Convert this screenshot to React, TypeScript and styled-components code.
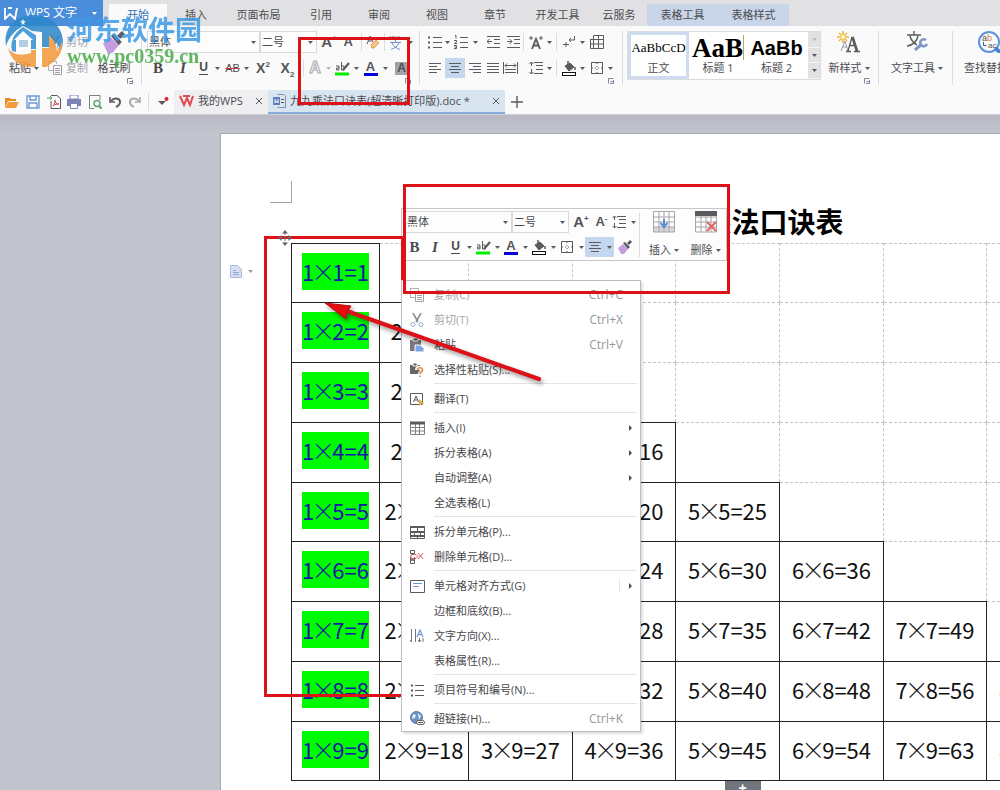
import React from "react";
import styled, { createGlobalStyle, css } from "styled-components";

const Global = createGlobalStyle`
  * { box-sizing: border-box; }
  body { margin: 0; background: #bfc1cb; }
  button, select { font: inherit; color: inherit; border: 0; background: none; padding: 0; margin: 0; }
  a { color: inherit; text-decoration: none; }
`;

/* ---------- shell ---------- */

const Shell = styled.div`
  position: relative;
  display: flex;
  flex-direction: column;
  height: 100vh;
  overflow: hidden;
  font: 11px/16px "Open Sans", "Noto Sans CJK SC", sans-serif;
  color: #4c4c50;
  white-space: nowrap;
`;

const TabBar = styled.nav`
  display: flex;
  align-items: flex-end;
  flex: none;
  height: 26px;
  background: #e1e1e3;
`;

const AppButton = styled.button`
  display: flex;
  align-items: center;
  gap: 7px;
  width: 103px;
  height: 26px;
  margin-right: 6px;
  padding: 0 4px;
  background: #4a8ddb;
  color: #fff;
  font-size: 12px;
`;

const RibbonTab = styled.button<{ $w: number; $kind?: "active" | "context" }>`
  flex: none;
  width: ${(p) => p.$w}px;
  height: 22px;
  padding-bottom: 1px;
  ${(p) => p.$kind === "active" && css`background: #fafafb; color: #2f6fc0;`}
  ${(p) => p.$kind === "context" && css`background: #c9d5e9;`}
`;

const Ribbon = styled.div`
  display: flex;
  flex: none;
  height: 64px;
  padding: 5px 0 4px;
  background: #fafafb;
`;

const Group = styled.div<{ $w?: number }>`
  display: flex;
  flex-direction: column;
  flex: none;
  width: ${(p) => (p.$w ? p.$w + "px" : "auto")};
`;

const Columns = styled.div`
  display: flex;
  height: 47px;
`;

const Row = styled.div<{ $h: number }>`
  display: flex;
  align-items: center;
  flex: none;
  height: ${(p) => p.$h}px;
`;

const Rows = styled.div`
  display: flex;
  flex-direction: column;
  gap: 5px;
`;

const GroupLine = styled.div`
  flex: none;
  width: 1px;
  height: 54px;
  margin: 0 4px 0 1px;
  background: #dcdce0;
`;

const Sep = styled.div`
  flex: none;
  width: 1px;
  height: 18px;
  margin: 0 3px;
  background: #dcdce0;
`;

const Tool = styled.button<{ $w: number; $on?: boolean }>`
  display: flex;
  align-items: center;
  justify-content: center;
  flex: none;
  width: ${(p) => p.$w}px;
  height: 20px;
  background: ${(p) => (p.$on ? "#c5d7ee" : "transparent")};
`;

const Spacer = styled.div<{ $w: number }>`
  flex: none;
  width: ${(p) => p.$w}px;
`;

const Launcher = styled.button`
  display: flex;
  align-self: flex-end;
  height: 8px;
  margin-right: 7px;
`;

const Picker = styled.label<{ $w: number }>`
  display: flex;
  align-items: center;
  flex: none;
  width: ${(p) => p.$w}px;
  height: 22px;
  padding-right: 3px;
  border: 1px solid #dadade;
  background: #fdfdfe;
  select {
    flex: 1;
    min-width: 0;
    padding-left: 1px;
    appearance: none;
    outline: none;
  }
`;

const Letter = styled.span<{ $kind?: "italic" | "under" | "strike" }>`
  font: bold 15px/18px "Liberation Serif", serif;
  color: #4a4a4e;
  ${(p) => p.$kind === "italic" && css`font-style: italic;`}
  ${(p) => p.$kind === "under" && css`font-family: "Liberation Sans", sans-serif; font-size: 12px; line-height: 13px; border-bottom: 1px solid #4a4a4e;`}
  ${(p) => p.$kind === "strike" && css`font: 11px/16px "Liberation Sans", sans-serif; text-decoration: line-through #d04040;`}
`;

const Glyph = styled.span<{ $s: number }>`
  font: bold ${(p) => p.$s}px/18px "Liberation Sans", sans-serif;
  color: #55555a;
  sup, sub { font-size: 8px; line-height: 0; }
`;

const InkLetter = styled.span`
  width: 14px;
  height: 16px;
  border-bottom: 3px solid #0404d8;
  font: bold 13px/13px "Liberation Sans", sans-serif;
  color: #55555a;
  text-align: center;
`;

const OutlineLetter = styled.span`
  font: bold 16px/18px "Liberation Sans", sans-serif;
  color: #fafafb;
  -webkit-text-stroke: 1px #aaaab0;
`;

const ShadedLetter = styled.span`
  width: 13px;
  height: 13px;
  background: #a2a2a8;
  font: bold 12px/13px "Liberation Sans", sans-serif;
  text-align: center;
`;

/* Large button with the drawing above its label */
const TallButton = styled.button<{ $w: number; $h?: number }>`
  display: flex;
  flex-direction: column;
  align-items: center;
  justify-content: space-between;
  flex: none;
  width: ${(p) => p.$w}px;
  height: ${(p) => p.$h || 46}px;
`;

const Caption = styled.span`
  display: flex;
  align-items: center;
  gap: 3px;
  line-height: 18px;
`;

const ClipItem = styled.button`
  display: flex;
  align-items: center;
  gap: 4px;
  height: 20px;
  color: #a5a5aa;
`;

/* ---------- style gallery ---------- */

const Gallery = styled.div`
  display: flex;
  flex: none;
  width: 194px;
  height: 49px;
  border: 1px solid #dcdce0;
  background: #fff;
`;

const StyleCard = styled.button<{ $w: number; $on?: boolean }>`
  display: flex;
  flex-direction: column;
  align-items: center;
  flex: none;
  width: ${(p) => p.$w}px;
  height: 47px;
  overflow: hidden;
  border: 3px solid ${(p) => (p.$on ? "#cfdcef" : "transparent")};
  border-width: ${(p) => (p.$on ? "3px" : "3px 0")};
`;

const Sample = styled.span<{ $kind: "body" | "h1" | "h2" }>`
  height: 25px;
  color: #000;
  font: 13px/26px "Liberation Serif", serif;
  ${(p) => p.$kind === "h1" && css`font: bold 27px/26px "Liberation Serif", serif; border-right: 1px solid #b9a45c;`}
  ${(p) => p.$kind === "h2" && css`font: bold 20px/26px "Liberation Sans", sans-serif;`}
`;

const Scroller = styled.div`
  display: flex;
  flex-direction: column;
  width: 12px;
  margin-left: auto;
  background: #e2e2e5;
  button {
    display: flex;
    flex: 1;
    align-items: center;
    justify-content: center;
    border-bottom: 1px solid #f4f4f5;
  }
`;

/* ---------- document tabs ---------- */

const QuickBar = styled.div`
  display: flex;
  align-items: center;
  flex: none;
  height: 25px;
  padding-left: 2px;
  border-bottom: 1px solid #d0d1d8;
  background: #fafafb;
`;

const FileTab = styled.div<{ $w: number; $on?: boolean }>`
  display: flex;
  align-items: center;
  gap: 4px;
  flex: none;
  width: ${(p) => p.$w}px;
  height: 24px;
  padding: 0 5px;
  background: ${(p) => (p.$on ? "#d9e4f1" : "#efeff1")};
  border-bottom: 2px solid ${(p) => (p.$on ? "#86abd9" : "#efeff1")};
  a { flex: 1; }
`;

/* ---------- document ---------- */

const Canvas = styled.main`
  flex: 1;
  min-height: 0;
  padding: 18px 0 0 220px;
  overflow: hidden;
  background: linear-gradient(#b7b8c3, #c2c4cd 18px);
`;

const Paper = styled.article`
  height: 100%;
  padding-top: 47px;
  border: 1px solid #a9abb6;
  border-width: 1px 0 0 1px;
  background: #fff;
`;

const CropCorner = styled.div`
  width: 22px;
  height: 22px;
  margin-left: 49px;
  border: solid #a4a4a8;
  border-width: 0 1px 1px 0;
`;

const Body = styled.div`
  display: grid;
  grid-template-columns: 70px 903px;
`;

const Title = styled.h1`
  grid-column: 2;
  height: 40px;
  margin: 0;
  padding-left: 6px;
  font: bold 28px/36px "Noto Sans CJK SC", sans-serif;
  color: #000;
  text-align: center;
`;

const Gutter = styled.div`
  display: flex;
  align-items: center;
  align-self: start;
  gap: 6px;
  padding: 22px 0 0 9px;
`;

const Times = styled.table`
  width: 903px;
  table-layout: fixed;
  border-collapse: collapse;
  font: 22px/37px "Liberation Sans Narrow", "Noto Sans CJK SC", sans-serif;
  color: #111;
  tr { height: 60px; }
  tr:nth-child(4n + 1) { height: 59px; }
  td { padding: 0 0 4px; border: 1px dashed #c4c4c8; text-align: center; }
  td.filled { border: 1px solid #222; }
`;

const Sum = styled.span<{ $marked: boolean }>`
  display: flex;
  justify-content: center;
  width: fit-content;
  height: 37px;
  margin: 0 auto;
  line-height: 36px;
  ${(p) => p.$marked && css`background: #00fb00; color: #1616a8;`}
`;

const Cross = styled.span`
  display: flex;
  justify-content: center;
  width: 18px;
  font-family: "Noto Sans CJK SC", sans-serif;
  font-weight: 300;
  font-size: 24px;
`;

const AddRow = styled.button`
  grid-column: 2;
  justify-self: center;
  width: 36px;
  height: 14px;
  background: #71757c;
  color: #fff;
  font: bold 14px/12px "Liberation Sans", sans-serif;
`;

/* ---------- floating layers ---------- */

const MiniBar = styled.div`
  position: absolute;
  left: 401px;
  top: 208px;
  display: flex;
  width: 326px;
  height: 53px;
  padding: 2px 0 0 3px;
  border: 1px solid #c6c6ca;
  background: #fdfdfe;
`;

const MiniRows = styled.div`
  display: flex;
  flex-direction: column;
  gap: 4px;
  width: 234px;
`;

const MiniLine = styled.div`
  width: 1px;
  height: 44px;
  margin: 2px 3px 0 1px;
  background: #dcdce0;
`;

const Menu = styled.div`
  position: absolute;
  left: 401px;
  top: 280px;
  width: 240px;
  padding: 1px 0 0;
  border: 1px solid #bdbdc2;
  background: #fff;
  box-shadow: 2px 2px 2px rgba(0, 0, 0, 0.12);
`;

const MenuItem = styled.button<{ $dim?: boolean }>`
  display: grid;
  grid-template-columns: 16px 1fr auto;
  column-gap: 8px;
  align-items: center;
  width: 100%;
  height: 25px;
  padding: 0 7px 0 8px;
  text-align: left;
  color: ${(p) => (p.$dim ? "#a6a6aa" : "#47474b")};
`;

const Keys = styled.span`
  padding-right: 10px;
  font-size: 12px;
  color: #96969a;
`;

const SubArrow = styled.span<{ $split?: boolean }>`
  display: flex;
  align-items: center;
  height: 14px;
  padding-left: 9px;
  border-left: 1px solid ${(p) => (p.$split ? "#e4e4e6" : "transparent")};
`;

const MenuLine = styled.hr`
  height: 1px;
  margin: 1px 3px 2px 32px;
  border: 0;
  background: #e4e4e6;
`;

const RedFrame = styled.div<{ $x: number; $y: number; $w: number; $h: number }>`
  position: absolute;
  left: ${(p) => p.$x}px;
  top: ${(p) => p.$y}px;
  width: ${(p) => p.$w}px;
  height: ${(p) => p.$h}px;
  border: 3px solid #dc1218;
  pointer-events: none;
`;

const Overlay = styled.svg<{ $x: number; $y: number }>`
  position: absolute;
  left: ${(p) => p.$x}px;
  top: ${(p) => p.$y}px;
  pointer-events: none;
`;

const ArrowShade = styled.g`
  filter: drop-shadow(2px 3px 2px rgba(0, 0, 0, 0.4));
`;

const Watermark = styled.div`
  position: absolute;
  left: 4px;
  top: 13px;
  display: flex;
  gap: 3px;
  opacity: 0.85;
  pointer-events: none;
`;

const WatermarkText = styled.div`
  display: flex;
  flex-direction: column;
  font: bold 27px/32px "Noto Sans CJK SC", sans-serif;
  color: #3d9be6;
  small {
    font: bold 20px/22px "Liberation Serif", serif;
    color: #48ab48;
  }
`;

/* ---------- drawings ---------- */

const G = "#5a5a5f";

const Ico = ({ w = 14, h = 14, children }: { w?: number; h?: number; children: React.ReactNode }) => (
  <svg width={w} height={h} viewBox={`0 0 ${w} ${h}`} fill="none" stroke={G} aria-hidden="true">
    {children}
  </svg>
);

const Caret = ({ c = G }: { c?: string }) => (
  <svg width="5" height="3" viewBox="0 0 5 3" aria-hidden="true"><path d="M0 0h5L2.500 3z" fill={c} /></svg>
);

const Lines = ({ d }: { d: string }) => <Ico w={12} h={13}><path d={d} /></Ico>;
const AlignLeft = () => <Lines d="M0 1.500h12M0 4.500h8M0 7.500h12M0 10.500h8" />;
const AlignCenter = () => <Lines d="M0 1.500h12M2 4.500h8M0 7.500h12M2 10.500h8" />;
const AlignRight = () => <Lines d="M0 1.500h12M4 4.500h8M0 7.500h12M4 10.500h8" />;
const Justify = () => <Lines d="M0 1.500h12M0 4.500h12M0 7.500h12M0 10.500h12" />;
const Distribute = () => (
  <Ico w={15}><path d="M.5 1v12M14.500 1v12M2 4.500h11M4 2.500l-2 2 2 2M11 2.500l2 2-2 2M2 8.500h11M2 11.500h11" /></Ico>
);
const Bullets = () => (
  <Ico><path d="M5 2.500h9M5 7.500h9M5 12.500h9" /><path d="M0 2.500h2M0 7.500h2M0 12.500h2" strokeWidth="2" /></Ico>
);
const Numbers = () => (
  <Ico><path d="M6 2.500h8M6 7.500h8M6 12.500h8M1 .5h1v3M0 5.500h2.500v1.500L.5 8.500h2.500M0 10.500h2.500v3H0M.5 12h2" /></Ico>
);
const Outdent = () => (
  <Ico w={13}><path d="M0 1.500h13M7 4.500h6M7 8.500h6M0 12.500h13M0 6.500h5M2.500 4L0 6.500 2.500 9" /></Ico>
);
const Indent = () => (
  <Ico w={13}><path d="M0 1.500h13M7 4.500h6M7 8.500h6M0 12.500h13M0 6.500h5M2.500 4L5 6.500 2.500 9" /></Ico>
);
const LineSpacing = () => (
  <Ico><path d="M5 1.500h9M7 4.500h7M7 8.500h7M5 12.500h9M2.500 1v4M.5 3l2-2 2 2M2.500 8v5M.5 11l2 2 2-2" /></Ico>
);
const CharScale = () => (
  <Ico w={16} h={15}>
    <path d="M4 14L8 4l4 10M5.500 10.500h5" strokeWidth="1.800" />
    <path d="M1 3h4M3 1v4M11 3h4M13 1v4" />
  </Ico>
);
const Wrap = () => <Ico w={12}><path d="M11.500 1v4H6M8 3L6 5l2 2M0 9.500h6M3 7v5" /></Ico>;
const GridPen = () => <Ico><path d="M3.500.5h10v13H.5V5M3.500.5v13M8.500.5v13M0 4.500h14M0 9h14" /></Ico>;
const Borders = () => (
  <Ico><path d="M1.500 1.500h11v11h-11z" /><path d="M7 2v10M2 7h10" strokeDasharray="1 2" /></Ico>
);
const Fill = () => (
  <Ico w={15} h={15}>
    <path d="M3 5l5-3 4 4-5 4z" fill={G} /><path d="M6 0v4M13 6v3" strokeWidth="1.500" />
    <rect x=".5" y="11.500" width="13" height="3" fill="#fff" stroke="#111" />
  </Ico>
);
const Highlighter = () => (
  <Ico w={15} h={15}>
    <path d="M1 5h3v4H1.500V7H4M6.500 1v8h2.500V5H6.500" /><path d="M14 2L8 9" strokeWidth="2.200" />
    <path d="M0 13h14" stroke="#00ee00" strokeWidth="3" />
  </Ico>
);
const Eraser = () => (
  <Ico><path d="M1 9l3-8 3 6M2 6h4" /><path d="M5 10l5-5 3 3-5 5H6z" fill="#f7c58c" stroke="#e79a4a" /></Ico>
);
const Pinyin = () => (
  <Ico w={13} h={15}><path d="M1 1l1 3 1.500-3L5 4l1-3M8 2h3v2" stroke="#8a8a90" /><path d="M1 7.500h11M6.500 5v2M3 8c1 3 4 5 8 6.500M10 8c-1 3-4 5-8 6.500" stroke="#6d8fce" /></Ico>
);
const Brush = ({ s = 14 }: { s?: number }) => (
  <svg width={s} height={s} viewBox="0 0 14 14" aria-hidden="true">
    <path d="M0 8l5-4 5 5-4 5H3z" fill="#c49ce0" /><path d="M5 3l2-1 5 5-2 2zM9 3l3-3 2 2-3 3z" fill={G} />
  </svg>
);
const LaunchMark = () => <Ico w={6} h={6}><path d="M.5 5.500v-5h5M2.500 3.500h3v2M5.500 2v3.500H2" stroke="#8085a0" /></Ico>;
const Cut = () => (
  <Ico><path d="M3 0l5 9M11 0L6 9" stroke="#8c8c92" strokeWidth="1.600" /><circle cx="3" cy="11.500" r="2" stroke="#8fb0cc" /><circle cx="11" cy="11.500" r="2" stroke="#8fb0cc" /></Ico>
);
const Copy = () => (
  <Ico><path d="M5 9.500H.5v-9h8V3" stroke="#b0b0b5" /><path d="M5.500 4.500h8v9h-8zM7 7.500h5M7 9.500h5M7 11.500h5" stroke="#a0a0a6" /></Ico>
);
const Paste = () => (
  <Ico><path d="M0 2h11v11H0z" fill="#77777c" stroke="none" /><path d="M3 0h5v3H3z" fill="#55555a" stroke="#fff" /><path d="M5 7h5l4 3v4H5z" fill="#7aa2e6" stroke="#fff" /></Ico>
);
const PasteSpecial = () => (
  <Ico><path d="M0 2h10v9H0z" fill="#66666b" stroke="none" /><path d="M3 0h4v3H3z" fill="#55555a" stroke="#fff" /><path d="M7 7c0-3 6-3 6 0 0 2-3 1.500-3 4M10 12v2" stroke="#fff" strokeWidth="4" /><path d="M7.500 7c0-3 5-3 5 0 0 2-2.500 1.500-2.500 4M10 12.500v1.500" stroke="#dd8c4a" strokeWidth="1.700" /></Ico>
);
const Translate = () => (
  <Ico><path d="M.5 1.500h12v11H.5z" /><path d="M3.500 10l2.500-6 2.500 6M4.500 8h3" /><path d="M9 7l5 4-5 3z" fill="#e0ae3c" stroke="none" /></Ico>
);
const InsertTable = () => (
  <Ico w={15}><path d="M.5 1.500h14v12H.5zM5.500 2v12M9.500 2v12M0 6.500h15M0 10h15" stroke="#808086" /><path d="M0 2h15" strokeWidth="3" /></Ico>
);
const SplitCell = () => (
  <Ico w={15}><path d="M.5 1.500h14v12H.5z" /><path d="M0 2h15M0 7h15M0 11h15" strokeWidth="2" /><path d="M7.500 2v4M4.500 7v4M10.500 7v4M7.500 11v3" /></Ico>
);
const DeleteCell = () => (
  <Ico><path d="M.5.5h4v3h-4zM.5 10h4v3.500h-4zM.5 7v3h4V7" /><path d="M1 4.500h5l2 2-2 2H1zM8 3l5 6M13 3L8 9" stroke="#dc5a5a" /></Ico>
);
const CellAlign = () => <Ico w={15}><path d="M.5 1.500h14v12H.5z" /><path d="M3 4.500h9M3 7.500h6" stroke="#6f93dc" /></Ico>;
const TextDirection = () => (
  <Ico><path d="M1.500 0v13M5.500 0v13M9.500 9v4M13 9v4M8 11l1.500 2L11 11M0 11l1.500 2" stroke="#77777c" /><path d="M7 8l3-7 3 7M8 5.500h4" stroke="#7a9fe0" strokeWidth="1.300" /></Ico>
);
const ListMark = () => (
  <Ico><path d="M5 2.500h9M5 7.500h9M5 12.500h9" /><path d="M1 2.500h2M1 7.500h2M1 12.500h2" strokeWidth="2" /></Ico>
);
const Globe = () => (
  <Ico w={15} h={15}><circle cx="6.500" cy="6.500" r="6" fill="#6f93bf" stroke="#56799f" /><path d="M3 3l3 1-1 3-3 1zM8 2l3 3-2 4z" fill="#e6eef8" stroke="none" /><rect x="6.500" y="9.500" width="8" height="4" rx="2" fill="#fff" /><path d="M8 11.500h5" /></Ico>
);
const BigGrid = ({ remove }: { remove?: boolean }) => (
  <Ico w={22} h={22}>
    {!remove && <path d="M1 16h20v5H1z" fill="#d6d6da" stroke="none" />}
    <path d="M.5.5h21v20.500H.5zM6 1v20M11 1v20M16 1v20M1 6h20M1 11h20M1 16h20" stroke="#a6a6ac" />
    {remove ? (
      <><path d="M0 2.500h22" strokeWidth="5" /><path d="M12 11l9 9M21 11l-9 9" stroke="#e46464" strokeWidth="2" /></>
    ) : (
      <path d="M11 8v7M7.500 12l3.500 4 3.500-4" stroke="#5b8ed0" strokeWidth="2" />
    )}
  </Ico>
);
const NewStyle = () => (
  <Ico w={24} h={22}>
    <path d="M6 0v12M0 6h12M2 2l8 8M10 2l-8 8" stroke="#f0b83a" strokeWidth="1.600" /><circle cx="6" cy="6" r="2" fill="#fff6c8" stroke="none" />
    <path d="M4 20l4-10 3 10M5 16h5" stroke="#a0a0a6" /><path d="M9 20.500h5M17 20.500h6M11 20l4-14M15 6l5 14M12.500 14.500h6" strokeWidth="1.300" /><path d="M15.500 6l4.500 14" strokeWidth="2.600" />
  </Ico>
);
const TextTools = () => (
  <Ico w={22} h={20}>
    <path d="M1 4h14M8 0v4M4 5c1 5 4 7 7 9M12 5c-1 5-5 9-11 10" strokeWidth="1.400" />
    <path d="M9 19l7-6" stroke="#8296c6" strokeWidth="3" />
    <path d="M20 9a3.500 3.500 0 1 0 1 4" stroke="#8296c6" strokeWidth="2.600" />
  </Ico>
);
const FindReplace = () => (
  <Ico w={24} h={22}>
    <circle cx="11" cy="11" r="10" stroke="#5c94dc" strokeWidth="2" /><path d="M17 17l6 5" stroke="#4a84d0" strokeWidth="4" />
    <text x="4" y="10" fontSize="9" fill="#55555a" stroke="none" fontFamily="Liberation Sans">a<tspan fill="#dd8040">b</tspan></text>
    <text x="10" y="17" fontSize="8" fill="#55555a" stroke="none" fontFamily="Liberation Sans">ac</text>
    <path d="M5.500 11v3.500h3" />
  </Ico>
);
const WpsMark = () => <Ico w={14} h={13}><path d="M1 1v11l5-5 5 5 2-11M4 1h4" stroke="#fff" strokeWidth="1.800" /></Ico>;
const RedW = () => <Ico w={15} h={12}><path d="M1 1l4 9 3-7 3 7 3-9M4 1h7" stroke="#e04a50" strokeWidth="2" /></Ico>;
const Folder = () => <Ico><path d="M0 3h5l1 1h5v2H3l-3 6z" fill="#e88a28" stroke="none" /><path d="M3 7h11l-3 6H0z" fill="#f29a3c" stroke="none" /></Ico>;
const Save = () => <Ico><path d="M1 1h12v12H1zM4 1v4h6V1M3 13V8h8v5" stroke="#6f9bd8" strokeWidth="1.400" /></Ico>;
const Pdf = () => <Ico><path d="M4 .5h6l3.500 3v10H4V6" /><path d="M0 3h5M3 1l2 2-2 2" stroke="#4aa060" /><path d="M6 11c2-2 2-4 2-6 0 3 2 4 4 4-2 0-4 0-6 2z" stroke="#d84a4a" /></Ico>;
const Print = () => <Ico><path d="M3 0h8v4H3z" fill="#fff" stroke="#7d82b8" /><path d="M0 4h14v7H0z" fill="#7d82b8" stroke="none" /><path d="M3.500 8.500h7v5h-7z" fill="#fff" stroke="#7d82b8" /></Ico>;
const Preview = () => <Ico><path d="M12 5V.5H1.500v13H6" stroke="#6d8a78" /><circle cx="9" cy="8.500" r="3" stroke="#5aa070" strokeWidth="1.400" /><path d="M11 11l3 3" stroke="#5aa070" strokeWidth="2" /></Ico>;
const Undo = ({ flip }: { flip?: boolean }) => (
  <Ico><g transform={flip ? "translate(14 0) scale(-1 1)" : undefined} stroke={flip ? "#a8a8ad" : G}><path d="M3 6c3-4 9-3 9 1 0 3-2 4-4 5" strokeWidth="2" /><path d="M2 2v5h5" strokeWidth="1.600" /></g></Ico>
);
const CloseX = () => <Ico w={8} h={8}><path d="M1 1l6 6M7 1L1 7" /></Ico>;
const Plus = () => <Ico w={12} h={12}><path d="M6 0v12M0 6h12" strokeWidth="1.400" /></Ico>;
const DocMark = () => (
  <Ico w={13}><path d="M4.500.5h6l2 2v11h-8" stroke="#7f8fb0" /><path d="M0 3h7v8H0z" fill="#5d7fc0" stroke="none" /><path d="M2 5v4l1.500-2L5 9V5" stroke="#fff" /><path d="M8 5.500h3M8 8.500h3" /></Ico>
);
const NoteMark = () => (
  <Ico w={12} h={13}><path d="M.5.5h7l4 4v8H.5z" fill="#d6e0f2" stroke="#a9bada" /><path d="M3 5.500h3M3 7.500h6M3 9.500h6" stroke="#8fa6d0" /></Ico>
);

/* ---------- data ---------- */

const tabs: [string, number, ("active" | "context")?][] = [
  ["开始", 58, "active"], ["插入", 58], ["页面布局", 67], ["引用", 58], ["审阅", 58], ["视图", 58],
  ["章节", 58], ["开发工具", 67], ["云服务", 56], ["表格工具", 71, "context"], ["表格样式", 71, "context"],
];

type Entry = { label: string; icon?: React.ReactNode; keys?: string; dim?: boolean; sub?: boolean; split?: boolean };
const menu: Entry[][] = [
  [
    { label: "复制(C)", icon: <Copy />, keys: "Ctrl+C", dim: true },
    { label: "剪切(T)", icon: <Cut />, keys: "Ctrl+X", dim: true },
    { label: "粘贴", icon: <Paste />, keys: "Ctrl+V" },
    { label: "选择性粘贴(S)...", icon: <PasteSpecial /> },
  ],
  [{ label: "翻译(T)", icon: <Translate /> }],
  [
    { label: "插入(I)", icon: <InsertTable />, sub: true },
    { label: "拆分表格(A)", sub: true },
    { label: "自动调整(A)", sub: true },
    { label: "全选表格(L)" },
  ],
  [
    { label: "拆分单元格(P)...", icon: <SplitCell /> },
    { label: "删除单元格(D)...", icon: <DeleteCell /> },
  ],
  [
    { label: "单元格对齐方式(G)", icon: <CellAlign />, sub: true, split: true },
    { label: "边框和底纹(B)..." },
    { label: "文字方向(X)...", icon: <TextDirection /> },
    { label: "表格属性(R)..." },
  ],
  [{ label: "项目符号和编号(N)...", icon: <ListMark /> }],
  [{ label: "超链接(H)...", icon: <Globe />, keys: "Ctrl+K" }],
];

const nine = [1, 2, 3, 4, 5, 6, 7, 8, 9];
const colWidths = [88, 89, 104, 103, 104, 104, 103, 104, 104];

/* ---------- parts ---------- */

const FontPickers = ({ first }: { first: number }) => (
  <>
    <Picker $w={first}>
      <select aria-label="字体"><option>黑体</option></select><Caret />
    </Picker>
    <Picker $w={57}>
      <select aria-label="字号"><option>二号</option></select><Caret />
    </Picker>
  </>
);

const Drop = ({ w, c }: { w: number; c?: string }) => <Tool $w={w} aria-label="更多"><Caret c={c} /></Tool>;

const FontGroup = () => (
  <Group $w={271}>
    <Rows>
      <Row $h={22}>
        <FontPickers first={113} />
        <Tool $w={24}><Glyph $s={15}>A<sup>+</sup></Glyph></Tool>
        <Tool $w={17}><Glyph $s={13}>A<sup>-</sup></Glyph></Tool>
        <Sep />
        <Tool $w={16} aria-label="清除格式"><Eraser /></Tool>
        <Sep />
        <Tool $w={14} aria-label="拼音"><Pinyin /></Tool>
        <Drop w={16} />
      </Row>
      <Row $h={20}>
        <Tool $w={22}><Letter>B</Letter></Tool>
        <Tool $w={28}><Letter $kind="italic">I</Letter></Tool>
        <Tool $w={13}><Letter $kind="under">U</Letter></Tool>
        <Drop w={14} />
        <Tool $w={17}><Letter $kind="strike">AB</Letter></Tool>
        <Drop w={10} />
        <Tool $w={24}><Glyph $s={14}>X<sup>2</sup></Glyph></Tool>
        <Tool $w={25}><Glyph $s={14}>X<sub>2</sub></Glyph></Tool>
        <Sep />
        <Tool $w={16}><OutlineLetter>A</OutlineLetter></Tool>
        <Drop w={10} c="#b8b8bc" />
        <Tool $w={19} aria-label="突出显示"><Highlighter /></Tool>
        <Drop w={8} />
        <Tool $w={21}><InkLetter>A</InkLetter></Tool>
        <Drop w={8} />
        <Tool $w={25}><ShadedLetter>A</ShadedLetter></Tool>
      </Row>
    </Rows>
    <Launcher aria-label="字体设置"><LaunchMark /></Launcher>
  </Group>
);

const ParagraphGroup = () => (
  <Group $w={196}>
    <Rows>
      <Row $h={22}>
        <Tool $w={19} aria-label="项目符号"><Bullets /></Tool>
        <Drop w={6} />
        <Tool $w={21} aria-label="编号"><Numbers /></Tool>
        <Drop w={8} />
        <Tool $w={28} aria-label="减少缩进"><Outdent /></Tool>
        <Tool $w={13} aria-label="增加缩进"><Indent /></Tool>
        <Sep />
        <Tool $w={18} aria-label="字符缩放"><CharScale /></Tool>
        <Drop w={8} />
        <Sep />
        <Tool $w={18} aria-label="换行"><Wrap /></Tool>
        <Drop w={8} />
        <Tool $w={22} aria-label="绘制表格"><GridPen /></Tool>
      </Row>
      <Row $h={20}>
        <Tool $w={20} aria-label="左对齐"><AlignLeft /></Tool>
        <Tool $w={20} $on aria-label="居中"><AlignCenter /></Tool>
        <Tool $w={20} aria-label="右对齐"><AlignRight /></Tool>
        <Tool $w={15} aria-label="两端对齐"><Justify /></Tool>
        <Tool $w={21} aria-label="分散对齐"><Distribute /></Tool>
        <Spacer $w={6} />
        <Tool $w={18} aria-label="行距"><LineSpacing /></Tool>
        <Drop w={8} />
        <Sep />
        <Tool $w={18} aria-label="底纹"><Fill /></Tool>
        <Drop w={8} />
        <Tool $w={21} aria-label="边框"><Borders /></Tool>
        <Drop w={6} />
      </Row>
    </Rows>
    <Launcher aria-label="段落设置"><LaunchMark /></Launcher>
  </Group>
);

const StyleGroup = () => (
  <Group $w={250}>
    <Columns>
      <Gallery>
        <StyleCard $w={61} $on><Sample $kind="body">AaBbCcD</Sample>正文</StyleCard>
        <StyleCard $w={58}><Sample $kind="h1">AaB</Sample>标题 1</StyleCard>
        <StyleCard $w={59}><Sample $kind="h2">AaBb</Sample>标题 2</StyleCard>
        <Scroller>
          <button aria-label="上一行"><Caret c="#bbb" /></button>
          <button aria-label="下一行"><Caret /></button>
          <button aria-label="展开"><Caret /></button>
        </Scroller>
      </Gallery>
      <Spacer $w={2} />
      <TallButton $w={52}><NewStyle /><Caption>新样式<Caret /></Caption></TallButton>
    </Columns>
    <Launcher aria-label="样式设置"><LaunchMark /></Launcher>
  </Group>
);

const ClipboardGroup = () => (
  <Group $w={140}>
    <Columns>
      <TallButton $w={48}><span /><Caption>粘贴<Caret /></Caption></TallButton>
      <Rows>
        <Row $h={22}><ClipItem><Cut />剪切</ClipItem></Row>
        <Row $h={20}><ClipItem><Copy />复制</ClipItem></Row>
      </Rows>
      <TallButton $w={52}><Brush s={22} /><Caption>格式刷</Caption></TallButton>
    </Columns>
    <Launcher aria-label="剪贴板设置"><LaunchMark /></Launcher>
  </Group>
);

const MiniToolbar = () => (
  <MiniBar>
    <MiniRows>
      <Row $h={22}>
        <FontPickers first={107} />
        <Tool $w={24}><Glyph $s={15}>A<sup>+</sup></Glyph></Tool>
        <Tool $w={17}><Glyph $s={13}>A<sup>-</sup></Glyph></Tool>
        <Tool $w={18} aria-label="行距"><LineSpacing /></Tool>
        <Drop w={10} />
      </Row>
      <Row $h={20}>
        <Tool $w={19}><Letter>B</Letter></Tool>
        <Tool $w={22}><Letter $kind="italic">I</Letter></Tool>
        <Tool $w={19}><Letter $kind="under">U</Letter></Tool>
        <Drop w={8} />
        <Tool $w={20} aria-label="突出显示"><Highlighter /></Tool>
        <Drop w={8} />
        <Tool $w={20}><InkLetter>A</InkLetter></Tool>
        <Drop w={8} />
        <Tool $w={20} aria-label="底纹"><Fill /></Tool>
        <Drop w={8} />
        <Tool $w={20} aria-label="边框"><Borders /></Tool>
        <Drop w={8} />
        <Tool $w={20} $on aria-label="居中"><AlignCenter /></Tool>
        <Tool $w={9} $on aria-label="更多"><Caret /></Tool>
        <Tool $w={22} aria-label="格式刷"><Brush /></Tool>
      </Row>
    </MiniRows>
    <MiniLine />
    <TallButton $w={42} $h={48}><BigGrid /><Caption>插入 <Caret /></Caption></TallButton>
    <TallButton $w={41} $h={48}><BigGrid remove /><Caption>删除 <Caret /></Caption></TallButton>
  </MiniBar>
);

const ContextMenu = () => (
  <Menu role="menu">
    {menu.map((section, i) => (
      <React.Fragment key={i}>
        {i > 0 && <MenuLine />}
        {section.map((e) => (
          <MenuItem key={e.label} $dim={e.dim} role="menuitem">
            {e.icon || <span />}
            <span>{e.label}</span>
            {e.keys && <Keys>{e.keys}</Keys>}
            {e.sub && (
              <SubArrow $split={e.split}>
                <svg width="4" height="6" viewBox="0 0 4 6" aria-hidden="true"><path d="M0 0l3 3-3 3z" fill="#4c4c50" /></svg>
              </SubArrow>
            )}
          </MenuItem>
        ))}
      </React.Fragment>
    ))}
  </Menu>
);

const TimesTable = () => (
  <Times>
    <colgroup>{colWidths.map((w, i) => <col key={i} width={w} />)}</colgroup>
    <tbody>
      {nine.map((r) => (
        <tr key={r}>
          {nine.map((c) => (
            <td key={c} className={c <= r ? "filled" : undefined}>
              {c <= r && <Sum $marked={c === 1}>{c}<Cross>×</Cross>{r}={c * r}</Sum>}
            </td>
          ))}
        </tr>
      ))}
    </tbody>
  </Times>
);

export default function App() {
  return (
    <Shell>
      <Global />
      <TabBar>
        <AppButton><WpsMark />WPS 文字<Spacer $w={1} /><Caret c="#fff" /></AppButton>
        {tabs.map(([label, w, kind]) => <RibbonTab key={label} $w={w} $kind={kind}>{label}</RibbonTab>)}
      </TabBar>
      <Ribbon>
        <ClipboardGroup />
        <GroupLine />
        <Spacer $w={1} />
        <FontGroup />
        <GroupLine />
        <Spacer $w={1} />
        <ParagraphGroup />
        <GroupLine />
        <StyleGroup />
        <GroupLine />
        <TallButton $w={68}><TextTools /><Caption>文字工具<Caret /></Caption></TallButton>
        <GroupLine />
        <TallButton $w={66}><FindReplace /><Caption>查找替换<Caret /></Caption></TallButton>
      </Ribbon>
      <QuickBar>
        <Tool $w={20} aria-label="打开"><Folder /></Tool>
        <Tool $w={21} aria-label="保存"><Save /></Tool>
        <Tool $w={21} aria-label="输出为PDF"><Pdf /></Tool>
        <Tool $w={20} aria-label="打印"><Print /></Tool>
        <Tool $w={21} aria-label="打印预览"><Preview /></Tool>
        <Tool $w={20} aria-label="撤销"><Undo /></Tool>
        <Tool $w={20} aria-label="恢复"><Undo flip /></Tool>
        <Sep />
        <Tool $w={22} aria-label="更多">
          <Ico w={12} h={10}><path d="M1 4h8L5 8z" fill={G} stroke="none" /><circle cx="9.500" cy="2" r="2" fill="#e02020" stroke="none" /></Ico>
        </Tool>
        <FileTab $w={94}><RedW /><a href="#home">我的WPS</a><button aria-label="关闭"><CloseX /></button></FileTab>
        <FileTab $w={237} $on><DocMark /><a href="#doc">九九乘法口诀表(超清晰打印版).doc *</a><button aria-label="关闭"><CloseX /></button></FileTab>
        <Tool $w={24} aria-label="新建"><Plus /></Tool>
      </QuickBar>
      <Canvas>
        <Paper>
          <CropCorner />
          <Body>
            <Title>九九乘法口诀表</Title>
            <Gutter><NoteMark /><Caret c="#9a9aa0" /></Gutter>
            <TimesTable />
            <AddRow aria-label="添加行">+</AddRow>
          </Body>
        </Paper>
      </Canvas>

      <MiniToolbar />
      <RedFrame $x={264} $y={236} $w={140} $h={461} />
      <ContextMenu />
      <RedFrame $x={298} $y={37} $w={112} $h={68} />
      <RedFrame $x={403} $y={184} $w={327} $h={110} />
      <Overlay $x={278} $y={230} width="14" height="16" viewBox="0 0 14 16">
        <path d="M7 0l3 3.500H4zM7 16l3-3.500H4zM0 8l3.500-3v6zM14 8l-3.500-3v6z" fill="#66666b" />
        <path d="M7 3v10M3 8h8" stroke="#66666b" strokeDasharray="2 1" />
      </Overlay>
      <Overlay $x={318} $y={296} width="236" height="98" viewBox="0 0 236 98">
        <ArrowShade>
          <path d="M26 14L221 83" stroke="#dc1218" strokeWidth="4" strokeLinecap="round" />
          <path d="M7 7l26 3-4 6-1 7z" fill="#e80c10" stroke="#b01014" />
        </ArrowShade>
      </Overlay>
      <Watermark>
        <svg width="60" height="56" viewBox="0 0 60 56" aria-hidden="true">
          <path d="M2 33C-1 14 12 3 28 2c17 0 30 10 31 26 0 4-1 8-3 11-1-7-4-11-9-14v9h-9V19l-10-1-9-5C11 17 5 24 2 33z" fill="#2b86ca" />
          <path d="M8 38c-2-8 1-18 11-24l14 9v13h-6v-9l-8-6-7 6v12z" fill="#2f8fd4" />
          <path d="M19 18l10 9h-3v10H13V27h-3z" fill="#fff" />
          <path d="M15 27h9v7h-9z" fill="#a9c6e0" />
          <path d="M32 20h6v34h-6z" fill="#fff" />
          <path d="M4 35c5 7 13 8 23 5v14C15 54 7 47 4 35zM27 37h5v17h-5zM38 35h7v18c-2 1-5 1-7 1zM45 22c5 5 7 9 8 16 2-3 4-6 5-10 1 11-4 19-13 24z" fill="#f2993a" />
          <path d="M19 6l1 2h2l-2 2 1 2-2-1-2 1 1-2-2-2h2z" fill="#fff" />
        </svg>
        <WatermarkText>河东软件园<small>www.pc0359.cn</small></WatermarkText>
      </Watermark>
    </Shell>
  );
}
